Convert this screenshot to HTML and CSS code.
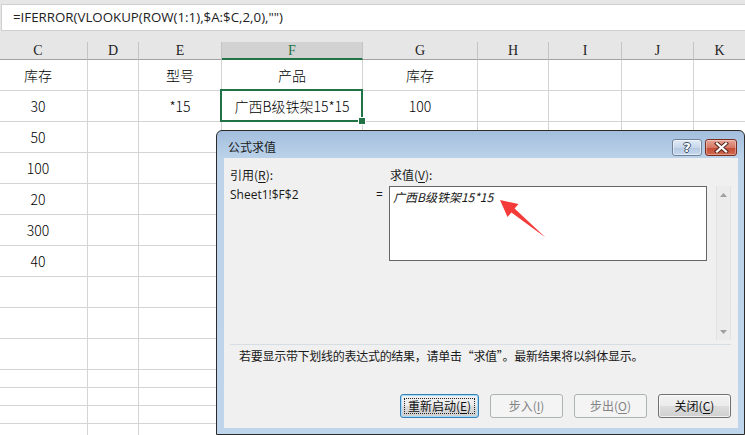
FILE: index.html
```html
<!DOCTYPE html>
<html lang="zh-CN">
<head>
<meta charset="utf-8">
<title>公式求值</title>
<link rel="stylesheet" href="styles.css">
</head>
<body>
<div class="formula-bar"><div class="fx-box">=IFERROR(VLOOKUP(ROW(1:1),$A:$C,2,0),"")</div></div>

<div class="sheet">
  <div class="h first">C</div><div class="h">D</div><div class="h">E</div><div class="h sel">F</div><div class="h">G</div><div class="h">H</div><div class="h">I</div><div class="h">J</div><div class="h last">K</div>

  <div class="c first">库存</div><div class="c"></div><div class="c">型号</div><div class="c">产品</div><div class="c">库存</div><div class="c"></div><div class="c"></div><div class="c"></div><div class="c last"></div>
  <div class="c first">30</div><div class="c"></div><div class="c">*15</div><div class="c active">广西B级铁架15*15</div><div class="c">100</div><div class="c"></div><div class="c"></div><div class="c"></div><div class="c last"></div>
  <div class="c first">50</div><div class="c"></div><div class="c"></div><div class="c"></div><div class="c"></div><div class="c"></div><div class="c"></div><div class="c"></div><div class="c last"></div>
  <div class="c first">100</div><div class="c"></div><div class="c"></div><div class="c"></div><div class="c"></div><div class="c"></div><div class="c"></div><div class="c"></div><div class="c last"></div>
  <div class="c first">20</div><div class="c"></div><div class="c"></div><div class="c"></div><div class="c"></div><div class="c"></div><div class="c"></div><div class="c"></div><div class="c last"></div>
  <div class="c first">300</div><div class="c"></div><div class="c"></div><div class="c"></div><div class="c"></div><div class="c"></div><div class="c"></div><div class="c"></div><div class="c last"></div>
  <div class="c first">40</div><div class="c"></div><div class="c"></div><div class="c"></div><div class="c"></div><div class="c"></div><div class="c"></div><div class="c"></div><div class="c last"></div>
  <div class="c first"></div><div class="c"></div><div class="c"></div><div class="c"></div><div class="c"></div><div class="c"></div><div class="c"></div><div class="c"></div><div class="c last"></div>
  <div class="c first"></div><div class="c"></div><div class="c"></div><div class="c"></div><div class="c"></div><div class="c"></div><div class="c"></div><div class="c"></div><div class="c last"></div>
  <div class="c first"></div><div class="c"></div><div class="c"></div><div class="c"></div><div class="c"></div><div class="c"></div><div class="c"></div><div class="c"></div><div class="c last"></div>
  <div class="c first"></div><div class="c"></div><div class="c"></div><div class="c"></div><div class="c"></div><div class="c"></div><div class="c"></div><div class="c"></div><div class="c last"></div>
  <div class="c first"></div><div class="c"></div><div class="c"></div><div class="c"></div><div class="c"></div><div class="c"></div><div class="c"></div><div class="c"></div><div class="c last"></div>
  <div class="c first"></div><div class="c"></div><div class="c"></div><div class="c"></div><div class="c"></div><div class="c"></div><div class="c"></div><div class="c"></div><div class="c last"></div>
  <div class="c first"></div><div class="c"></div><div class="c"></div><div class="c"></div><div class="c"></div><div class="c"></div><div class="c"></div><div class="c"></div><div class="c last"></div>
</div>

<div class="dialog">
  <div class="titlebar">
    <div class="title">公式求值</div>
    <div class="caption-btns">
      <div class="cbtn help"><span>?</span></div>
      <div class="cbtn close">
        <svg width="17" height="11" viewBox="0 0 17 11"><path d="M4 1.5 L13 9.5 M13 1.5 L4 9.5" stroke="#5a2a22" stroke-width="4.2" stroke-linecap="square" fill="none"/><path d="M4 1.5 L13 9.5 M13 1.5 L4 9.5" stroke="#ffffff" stroke-width="2.2" stroke-linecap="square" fill="none"/></svg>
      </div>
    </div>
  </div>
  <div class="client">
    <div class="fields">
      <div class="lbl">引用(<u>R</u>):</div>
      <div></div>
      <div class="lbl val-lbl">求值(<u>V</u>):</div>
      <div></div>
      <div></div>
      <div class="ref">Sheet1!$F$2</div>
      <div class="eq">=</div>
      <div class="valbox"><span class="result">广西B级铁架15*15</span></div>
      <div></div>
      <div class="vscroll">
        <svg class="arr" width="7" height="4" viewBox="0 0 7 4"><path d="M0 4 L3.5 0 L7 4 Z" fill="#a0a0a0"/></svg>
        <svg class="arr" width="7" height="4" viewBox="0 0 7 4"><path d="M0 0 L3.5 4 L7 0 Z" fill="#a0a0a0"/></svg>
      </div>
    </div>
    <div class="sep"></div>
    <div class="hint">若要显示带下划线的表达式的结果，请单击“求值”。最新结果将以斜体显示。</div>
    <div class="buttons">
      <div class="btn default"><span class="focus">重新启动(<u>E</u>)</span></div>
      <div class="btn disabled">步入(<u>I</u>)</div>
      <div class="btn disabled">步出(<u>O</u>)</div>
      <div class="btn">关闭(<u>C</u>)</div>
    </div>
  </div>
</div>

<svg class="arrow" width="60" height="50" viewBox="495 195 60 50">
  <polygon points="500,200 518.5,204 514.6,208.6 545.5,237.5 511.4,212.4 507.5,217" fill="#f53a3a"/>
</svg>
</body>
</html>
```

FILE: styles.css
```css
* { box-sizing: border-box; }
html, body { margin: 0; padding: 0; }
body {
  width: 745px;
  height: 435px;
  overflow: hidden;
  position: relative;
  background: #ffffff;
  font-family: "Noto Sans CJK SC", sans-serif;
}

/* formula bar */
.formula-bar {
  height: 42px;
  background: #e6e6e6;
  padding: 4px 0 0 1px;
}
.fx-box {
  height: 27px;
  background: #ffffff;
  border: 1px solid #cfcfcf;
  border-right: none;
  padding-left: 11px;
  font: 13.3px/25px "Open Sans", sans-serif;
  color: #222;
  white-space: nowrap;
}

/* sheet grid */
.sheet {
  display: grid;
  grid-template-columns: 88px 51px 83px 141px 115px 71px 73px 72px 1fr;
  grid-template-rows: 18px repeat(10, 31px) repeat(4, 18px);
}
.h {
  background: #e6e6e6;
  border-right: 1px solid #c4c4c4;
  border-bottom: 1px solid #a2a2a2;
  font: 14px/17px "Liberation Serif", serif;
  text-align: center;
  color: #222;
}
.h.sel {
  background: #d2d2d2;
  border-bottom: 2px solid #217346;
  color: #217346;
}
.h.last, .c.last { border-right: none; }
.c {
  border-right: 1px solid #d4d4d4;
  border-bottom: 1px solid #d4d4d4;
  text-align: center;
  font: 300 14px/30px "Noto Sans CJK SC", sans-serif;
  color: #000;
  white-space: nowrap;
}
.first { padding-right: 11px; }
.c.active { position: relative; }
.c.active::after {
  content: "";
  position: absolute;
  left: -2px; top: -2px; right: -1px; bottom: -1px;
  border: 2px solid #217346;
}
.c.active::before {
  content: "";
  position: absolute;
  right: -4px; bottom: -4px;
  width: 6px; height: 6px;
  background: #217346;
  border: 1px solid #fff;
  z-index: 2;
}

/* dialog */
.dialog {
  position: absolute;
  left: 216px;
  top: 130px;
  width: 529px;
  height: 305px;
  border: 1px solid #2b2b2b;
  border-radius: 6px 6px 0 0;
  background: linear-gradient(#a3bedd, #bcd3ea 28px, #bfd5ec);
  display: flex;
  flex-direction: column;
  font-size: 12px;
  color: #1a1a1a;
}
.titlebar {
  height: 27px;
  display: flex;
  padding: 0 7px 0 11px;
}
.title {
  margin-top: 7px;
  line-height: 17px;
  font-size: 12px;
  color: #1a1a1a;
}
.caption-btns {
  margin-left: auto;
  margin-top: 8px;
  display: flex;
  gap: 3px;
}
.cbtn {
  height: 17px;
  border-radius: 3px;
  display: flex;
  align-items: center;
  justify-content: center;
}
.cbtn.help {
  width: 30px;
  border: 1px solid #6f8299;
  background: linear-gradient(#e2ebf6, #c7d7ea 50%, #b3c8e1 51%, #c6d8ec);
  box-shadow: inset 0 0 0 1px rgba(255,255,255,0.5);
}
.cbtn.help span {
  font: bold 13px/15px "DejaVu Sans", sans-serif;
  color: #fff;
  text-shadow: 1px 0 0 #3d4f66, -1px 0 0 #3d4f66, 0 1px 0 #3d4f66, 0 -1px 0 #3d4f66;
}
.cbtn.close {
  width: 32px;
  border: 1px solid #7a2e22;
  background: linear-gradient(#e7a595, #d57764 50%, #c54a33 51%, #d06a50);
  box-shadow: inset 0 0 0 1px rgba(255,255,255,0.35);
}

.client {
  flex: 1;
  margin: 0 6px 6px 7px;
  background: #f0f0f0;
  padding: 7px 7px 0 6px;
  display: flex;
  flex-direction: column;
}
.fields {
  display: grid;
  grid-template-columns: 146px 13px 318px 9px 15px;
  grid-template-rows: 21px 154px;
}
.lbl { line-height: 20px; }
.val-lbl { padding-left: 1px; }
.ref, .eq {
  font: 12px/17px "Open Sans", "Noto Sans CJK SC", sans-serif;
}
.valbox {
  height: 75px;
  background: #fff;
  border: 1px solid #666;
  padding: 1px 0 0 3px;
}
.result {
  font-style: italic;
  line-height: 17px;
  color: #1a1a1a;
}
.vscroll {
  background: #ececec;
  border-left: 1px solid #e2e2e2;
  border-right: 1px solid #e2e2e2;
  display: flex;
  flex-direction: column;
  justify-content: space-between;
  align-items: center;
  padding: 7px 0 6px;
}
.sep {
  margin-top: 4px;
  height: 1px;
  background: #d6dee4;
}
.hint {
  margin-top: 2px;
  padding-left: 9px;
  line-height: 18px;
  letter-spacing: -0.28px;
  white-space: nowrap;
}
.buttons {
  margin-top: 29px;
  display: flex;
  justify-content: flex-end;
  gap: 11px;
}
.btn {
  width: 73px;
  height: 24px;
  border: 1px solid #707070;
  border-radius: 3px;
  background: linear-gradient(#f2f2f2, #ebebeb 50%, #dddddd 51%, #cfcfcf);
  box-shadow: inset 0 0 0 1px rgba(255,255,255,0.7);
  display: flex;
  align-items: center;
  justify-content: center;
  line-height: 16px;
  color: #111;
}
.btn.default {
  width: 79px;
  border-color: #3c7fb1;
  box-shadow: inset 0 0 0 1px #9fdcff;
  padding: 3px;
}
.btn.default .focus {
  flex: 1;
  align-self: stretch;
  border: 1px dotted #222;
  display: flex;
  align-items: center;
  justify-content: center;
}
.btn.disabled {
  border-color: #adb2b5;
  background: #f4f4f4;
  box-shadow: none;
  color: #838383;
}
u { text-decoration-thickness: 1px; text-underline-offset: 2px; }

.arrow {
  position: absolute;
  left: 495px;
  top: 195px;
}
```
